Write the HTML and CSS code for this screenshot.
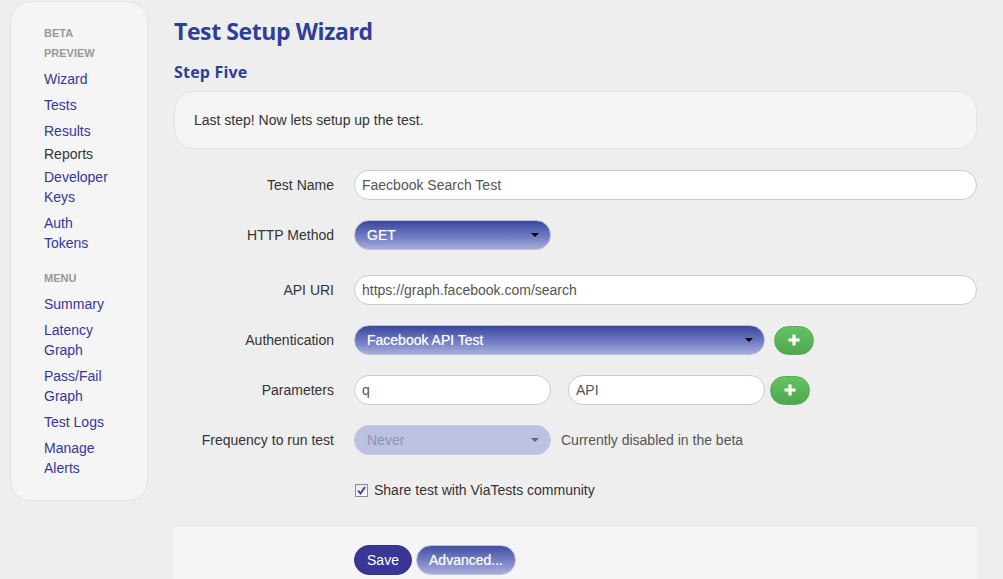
FILE: index.html
```html
<!DOCTYPE html>
<html lang="en">
<head>
    <meta charset="UTF-8">
    <title>Test Setup Wizard</title>
    <link rel="stylesheet" href="styles.css">
</head>
<body>
    <div class="page">
        <!--侧边栏-->
        <div class="sidebar">
            <ul class="nav-list">
                <li class="nav-header">Beta<br>Preview</li>
                <li><a href="#">Wizard</a></li>
                <li><a href="#">Tests</a></li>
                <li><a href="#">Results</a></li>
                <li class="plain">Reports</li>
                <li><a href="#">Developer<br>Keys</a></li>
                <li><a href="#">Auth<br>Tokens</a></li>
                <li class="nav-header second">Menu</li>
                <li><a href="#">Summary</a></li>
                <li><a href="#">Latency<br>Graph</a></li>
                <li><a href="#">Pass/Fail<br>Graph</a></li>
                <li><a href="#">Test Logs</a></li>
                <li><a href="#">Manage<br>Alerts</a></li>
            </ul>
        </div>

        <!--主体-->
        <div class="main">
            <h1>Test Setup Wizard</h1>
            <h2>Step Five</h2>
            <div class="well">Last step! Now lets setup up the test.</div>

            <div class="form">
                <div class="control-group">
                    <label class="control-label">Test Name</label>
                    <div class="controls">
                        <input class="input wide" type="text" value="Faecbook Search Test">
                    </div>
                </div>
                <div class="control-group tall">
                    <label class="control-label">HTTP Method</label>
                    <div class="controls">
                        <div class="select small"><span>GET</span><i class="caret"></i></div>
                    </div>
                </div>
                <div class="control-group">
                    <label class="control-label">API URI</label>
                    <div class="controls">
                        <input class="input wide" type="text" value="https://graph.facebook.com/search">
                    </div>
                </div>
                <div class="control-group">
                    <label class="control-label">Authentication</label>
                    <div class="controls">
                        <div class="select large"><span>Facebook API Test</span><i class="caret"></i></div>
                        <a class="btn-add" href="#"><svg width="12" height="12" viewBox="0 0 12 12"><path d="M6 0.5v11M0.5 6h11" stroke="#fff" stroke-width="3.2"/></svg></a>
                    </div>
                </div>
                <div class="control-group">
                    <label class="control-label">Parameters</label>
                    <div class="controls">
                        <input class="input small" type="text" value="q">
                        <input class="input small second" type="text" value="API">
                        <a class="btn-add near" href="#"><svg width="12" height="12" viewBox="0 0 12 12"><path d="M6 0.5v11M0.5 6h11" stroke="#fff" stroke-width="3.2"/></svg></a>
                    </div>
                </div>
                <div class="control-group">
                    <label class="control-label">Frequency to run test</label>
                    <div class="controls">
                        <div class="select small disabled"><span>Never</span><i class="caret"></i></div>
                        <span class="help-inline">Currently disabled in the beta</span>
                    </div>
                </div>
                <div class="control-group">
                    <label class="control-label"></label>
                    <div class="controls">
                        <span class="checkbox"><svg width="9" height="9" viewBox="0 0 9 9"><path d="M1 4.5l2.5 3L8 1" fill="none" stroke="#2c3f9c" stroke-width="1.8"/></svg></span>
                        <span class="check-text">Share test with ViaTests community</span>
                    </div>
                </div>
                <div class="form-actions">
                    <a class="btn save" href="#">Save</a>
                    <a class="btn advanced" href="#">Advanced...</a>
                </div>
            </div>
        </div>
    </div>
</body>
</html>
```

FILE: styles.css
```css
*{
    margin: 0px;
    padding: 0px;
}
ul{
    list-style: none;
}
body{
    background-color: #eeeeee;
    font-family: "Liberation Sans", Arial, sans-serif;
    font-size: 14px;
    line-height: 20px;
    color: #333;
}
a{
    text-decoration: none;
}
.page{
    display: flex;
    align-items: flex-start;
    padding-left: 10px;
    gap: 26px;
}

/*侧边栏*/
.sidebar{
    width: 138px;
    margin-top: 1px;
    padding: 21px 0 19px 33px;
    box-sizing: border-box;
    background-color: #f5f5f5;
    border: 1px solid #e3e3e3;
    border-radius: 20px;
}
.nav-header{
    font-size: 11px;
    font-weight: bold;
    line-height: 20px;
    color: #999;
    text-transform: uppercase;
    margin-bottom: 3px;
}
.nav-header.second{
    margin-top: 12px;
}
.nav-list li a{
    display: block;
    padding: 3px 0;
    color: #3636a0;
}
.nav-list li.plain{
    color: #333;
}

/*主体*/
.main{
    width: 803px;
}
h1{
    font-family: "Open Sans", sans-serif;
    font-size: 23px;
    font-weight: 700;
    line-height: 30px;
    margin-top: 16px;
    color: #2f3e98;
    letter-spacing: -0.4px;
}
h2{
    font-family: "Open Sans", sans-serif;
    font-size: 16px;
    font-weight: 700;
    line-height: 24px;
    margin-top: 14px;
    color: #2f3e98;
    letter-spacing: 0.2px;
}
.well{
    margin-top: 7px;
    padding: 18px 19px;
    background-color: #f5f5f5;
    border: 1px solid #e3e3e3;
    border-radius: 20px;
}
.form{
    margin-top: 21px;
}
.control-group{
    display: flex;
    height: 30px;
    margin-bottom: 20px;
}
.control-group.tall{
    margin-bottom: 25px;
}
.control-label{
    width: 160px;
    margin-right: 20px;
    text-align: right;
    line-height: 30px;
}
.controls{
    flex: 1;
    display: flex;
    align-items: center;
}
.input{
    height: 30px;
    box-sizing: border-box;
    border: 1px solid #cccccc;
    border-radius: 15px;
    background-color: #fff;
    padding: 0 7px;
    font-family: "Liberation Sans", Arial, sans-serif;
    font-size: 14px;
    color: #555;
    outline: none;
}
.input.wide{
    width: 623px;
}
.input.small{
    width: 197px;
}
.input.second{
    margin-left: 17px;
}
.select{
    height: 30px;
    box-sizing: border-box;
    display: flex;
    align-items: center;
    justify-content: space-between;
    padding: 0 11px 0 12px;
    border: 1px solid #b9bdd6;
    border-radius: 15px;
    background: linear-gradient(#39479d, #7480c4 60%, #a8aedb);
    color: #fff;
    text-shadow: 0 0 1px rgba(255,255,255,0.6);
}
.select.small{
    width: 197px;
}
.select.large{
    width: 411px;
}
.select.disabled{
    background: #bcc0e1;
    border-color: #c4c7e0;
    color: #8e94b8;
    text-shadow: none;
}
.caret{
    width: 0;
    height: 0;
    border-top: 4px solid #000;
    border-left: 4px solid transparent;
    border-right: 4px solid transparent;
}
.select.disabled .caret{
    border-top-color: #666;
}
.btn-add{
    display: flex;
    align-items: center;
    justify-content: center;
    width: 40px;
    height: 29px;
    margin-left: 9px;
    border: 1px solid #58a958;
    border-radius: 15px;
    box-sizing: border-box;
    background: linear-gradient(#62c462, #4fa74f);
}
.btn-add.near{
    margin-left: 5px;
}
.help-inline{
    margin-left: 10px;
    color: #555;
}
.checkbox{
    display: flex;
    align-items: center;
    justify-content: center;
    width: 13px;
    height: 13px;
    box-sizing: border-box;
    margin-left: 1px;
    border: 1px solid #8e8f8f;
    background: linear-gradient(#e6e6e6, #fafafa);
}
.check-text{
    margin-left: 6px;
}
.form-actions{
    padding: 19px 0 19px 180px;
    background-color: #f5f5f5;
    border-top: 1px solid #e5e5e5;
    display: flex;
    gap: 4px;
}
.btn{
    display: block;
    height: 30px;
    line-height: 28px;
    box-sizing: border-box;
    border-radius: 15px;
    color: #fff;
    border: 1px solid #c0c3dc;
    text-align: center;
}
.btn.save{
    width: 58px;
    background-color: #3a3695;
    border-color: #35318a;
}
.btn.advanced{
    width: 100px;
    background: linear-gradient(#434fa2, #7d87c8 60%, #a8aedb);
    text-shadow: 0 0 1px rgba(255,255,255,0.6);
}
```
